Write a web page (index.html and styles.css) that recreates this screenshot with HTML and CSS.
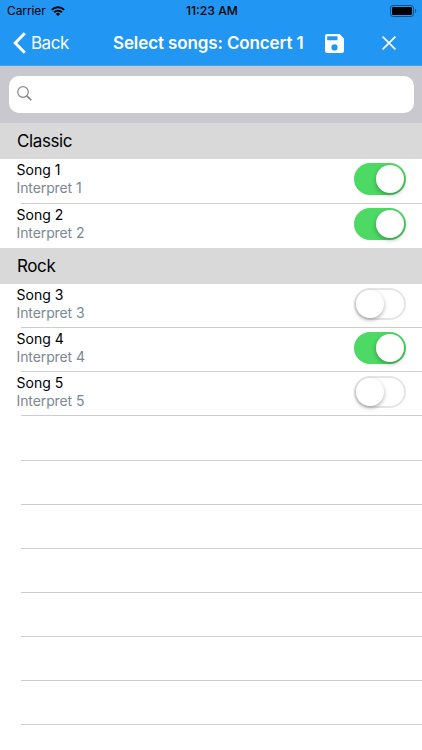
FILE: index.html
```html
<!DOCTYPE html>
<html lang="en">
<head>
  <meta charset="UTF-8" />
  <meta name="viewport" content="width=device-width, initial-scale=1.0" />
  <title>Select songs</title>
  <link rel="stylesheet" href="styles.css">
</head>
<body>
  <header>
    <div class="status">
      <div class="carrier">
        <span>Carrier</span>
        <svg width="14" height="10" viewBox="0 0 14 10" fill="none" stroke="#000" stroke-width="2">
          <path d="M.8 3.9a8.8 8.8 0 0 1 12.4 0M3.1 6.3a5.5 5.5 0 0 1 7.8 0" />
          <path d="M7 10 4.9 7.9a3 3 0 0 1 4.2 0z" fill="#000" stroke="none" />
        </svg>
      </div>
      <span class="time">11:23 AM</span>
      <svg class="battery" width="27" height="12" viewBox="0 0 27 12">
        <rect x=".5" y=".5" width="23" height="11" rx="2.6" fill="none" stroke="#124f84" />
        <rect x="2" y="2" width="20" height="8" rx="1.3" />
        <path d="M25 4v4c1.7-.7 1.7-3.3 0-4z" fill="#124f84" />
      </svg>
    </div>
    <nav>
      <a class="back">
        <svg width="13" height="22" viewBox="0 0 13 22" fill="none" stroke="#fff" stroke-width="3">
          <path d="M11.8 1.2 2.2 11l9.6 9.8" />
        </svg>
        <span>Back</span>
      </a>
      <h1>Select songs: Concert 1</h1>
      <svg class="save" width="19" height="19" viewBox="0 0 19 19">
        <path fill="#fff" fill-rule="evenodd" d="M2.2 0h12.4L19 4.4v12.400A2.200 2.200 0 0 1 16.800 19H2.200A2.200 2.200 0 0 1 0 16.800V2.200A2.200 2.200 0 0 1 2.200 0zM2.200 2.300v4h10.300v-4zM9.500 10.300a3.100 3.100 0 1 0 0 6.200a3.100 3.100 0 1 0 0-6.200z" />
      </svg>
      <svg class="close" width="14" height="14" viewBox="0 0 14 14" stroke="#fff" stroke-width="1.7">
        <path d="M.6.6l12.800 12.800M13.400.6L.6 13.400" />
      </svg>
    </nav>
  </header>

  <div class="search">
    <div class="field">
      <svg width="15" height="15" viewBox="0 0 15 15" fill="none" stroke="#8a8a8d">
        <circle cx="6" cy="6" r="5.300" stroke-width="1.200" />
        <path d="M9.800 9.800l4.500 4.400" stroke-width="1.800" />
      </svg>
    </div>
  </div>

  <main>
    <h2>Classic</h2>
    <div class="row">
      <div class="song"><p>Song 1</p><p class="by">Interpret 1</p></div>
      <div class="switch on"></div>
    </div>
    <div class="row last">
      <div class="song"><p>Song 2</p><p class="by">Interpret 2</p></div>
      <div class="switch on"></div>
    </div>
    <h2>Rock</h2>
    <div class="row">
      <div class="song"><p>Song 3</p><p class="by">Interpret 3</p></div>
      <div class="switch"></div>
    </div>
    <div class="row">
      <div class="song"><p>Song 4</p><p class="by">Interpret 4</p></div>
      <div class="switch on"></div>
    </div>
    <div class="row">
      <div class="song"><p>Song 5</p><p class="by">Interpret 5</p></div>
      <div class="switch"></div>
    </div>
    <div class="row"></div>
    <div class="row"></div>
    <div class="row"></div>
    <div class="row"></div>
    <div class="row"></div>
    <div class="row"></div>
    <div class="row"></div>
  </main>
</body>
</html>
```
FILE: styles.css
```css
* {
  box-sizing: border-box;
}
body {
  margin: 0;
  height: 750px;
  overflow: hidden;
  background: #fff;
  color: #000;
  font-family: Inter, "Liberation Sans", sans-serif;
}
h1, h2, p {
  margin: 0;
}
svg {
  display: block;
  flex: none;
}
header {
  height: 66px;
  background: #2196f3;
  border-bottom: 1px solid #4b9ee3;
}
.status {
  display: grid;
  grid-template-columns: 1fr auto 1fr;
  align-items: center;
  height: 21px;
  padding: 0 5px 0 7px;
  font-size: 12px;
}
.carrier {
  display: flex;
  align-items: center;
  gap: 5px;
  letter-spacing: -0.1px;
}
.time {
  font-weight: 500;
  font-size: 12.2px;
}
.battery {
  justify-self: end;
}
nav {
  display: flex;
  align-items: center;
  height: 44px;
  padding-left: 13px;
  color: #fff;
}
.back {
  display: flex;
  align-items: center;
  gap: 5px;
  width: 100px;
  font-size: 17px;
  letter-spacing: -0.5px;
}
h1 {
  width: 212px;
  font-size: 17px;
  font-weight: 600;
  letter-spacing: -0.12px;
  white-space: nowrap;
}
.close {
  margin-left: 38px;
}
.search {
  height: 57px;
  padding: 9.5px 8.5px 0;
  background: #c9c8ce;
}
.field {
  display: flex;
  align-items: center;
  height: 37px;
  padding-left: 8px;
  border-radius: 10px;
  background: #fff;
}
.field svg {
  margin-bottom: 1px;
}
h2 {
  height: 36.4px;
  padding-left: 17px;
  background: #d9d9d9;
  font-size: 17px;
  font-weight: 400;
  line-height: 37px;
  letter-spacing: -0.4px;
}
.row {
  display: flex;
  justify-content: space-between;
  height: 44.15px;
  padding: 2px 16.5px 0;
  background: linear-gradient(#cdcdd0, #cdcdd0) 21px 100% / 100% 1px no-repeat;
}
.row.last {
  background: none;
}
.song {
  font-size: 14px;
  line-height: 18px;
}
.by {
  color: #7b8794;
  letter-spacing: -0.1px;
}
.switch {
  width: 52px;
  height: 32px;
  margin-top: 2px;
  border: 2px solid #e5e5e5;
  border-radius: 16px;
}
.switch::before {
  content: "";
  display: block;
  width: 28px;
  height: 28px;
  border-radius: 50%;
  background: #fff;
  box-shadow: 0 2px 4px rgba(0, 0, 0, 0.3);
}
.switch.on {
  border-color: #4cd964;
  background: #4cd964;
}
.switch.on::before {
  margin-left: 20px;
}
```
